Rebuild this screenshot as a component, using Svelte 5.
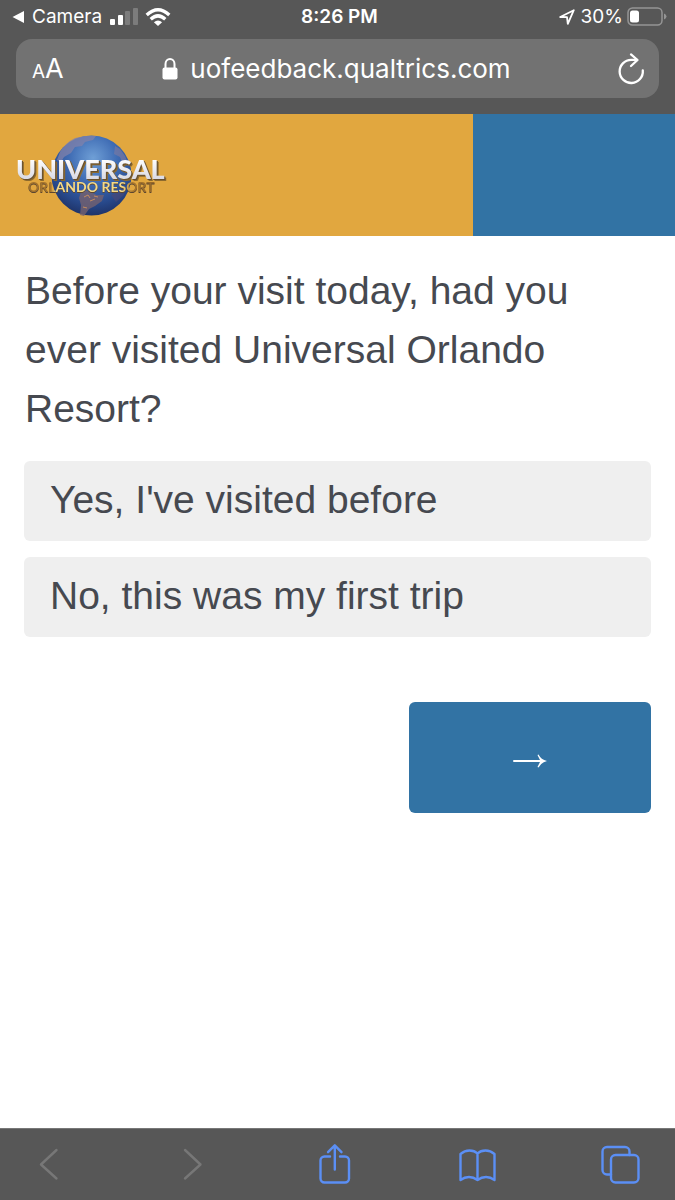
<script>
  const options = [
    { value: 'yes', label: "Yes, I've visited before" },
    { value: 'no', label: 'No, this was my first trip' }
  ];
  let answer = $state('');
</script>

<div class="screen">
  <header class="browser">
    <div class="status">
      <div class="side">
        <svg width="12" height="14" viewBox="0 0 12 14" aria-hidden="true"><path d="M0.5 7 12 1v12z" fill="#fff" /></svg>
        <span class="back">Camera</span>
        <svg class="signal" width="28" height="18" viewBox="0 0 28 18" aria-hidden="true">
          <rect x="0" y="11" width="5" height="6" rx="1" fill="#fff" />
          <rect x="8" y="7" width="5" height="10" rx="1" fill="#fff" />
          <rect x="15" y="3" width="5" height="14" rx="1" fill="#7c7c7c" />
          <rect x="23" y="0" width="5" height="17" rx="1" fill="#7c7c7c" />
        </svg>
        <svg class="wifi" width="26" height="19" viewBox="0 0 26 19" aria-hidden="true">
          <g fill="none" stroke="#fff" stroke-width="3.4">
            <path d="M1.7 7Q13-3.4 24.3 7" />
            <path d="M5.7 11.2Q13 4.6 20.3 11.2" />
          </g>
          <path d="M8.9 14.3Q13 10.8 17.100 14.300L13 18z" fill="#fff" />
        </svg>
      </div>
      <strong class="time">8:26 PM</strong>
      <div class="side right">
        <svg width="16" height="16" viewBox="0 0 16 16" aria-hidden="true"><path d="M1.200 8 14.800 1.200 8.800 14.800 8 8.200z" fill="none" stroke="#fff" stroke-width="1.8" stroke-linejoin="round" /></svg>
        <span class="percent">30%</span>
        <svg class="battery" width="40" height="20" viewBox="0 0 40 20" aria-hidden="true">
          <rect x="1" y="1" width="34" height="17" rx="4.500" fill="none" stroke="#959595" stroke-width="1.500" />
          <rect x="3" y="3.500" width="9" height="12" rx="2.500" fill="#fff" />
          <path d="M37 6.500q2.500 1 2.500 3t-2.500 3z" fill="#959595" />
        </svg>
      </div>
    </div>
    <div class="address">
      <button class="text-size" aria-label="Text size"><span class="small">A</span><span>A</span></button>
      <div class="url">
        <svg width="16" height="22" viewBox="0 0 16 22" aria-hidden="true">
          <path d="M3.500 10V6a4.500 5 0 0 1 9 0v4" fill="none" stroke="#fff" stroke-width="2" />
          <rect x="0.500" y="9.500" width="15" height="12" rx="2" fill="#fff" />
        </svg>
        <span>uofeedback.qualtrics.com</span>
      </div>
      <button class="reload" aria-label="Reload">
        <svg width="28" height="32" viewBox="0 0 28 32">
          <g fill="none" stroke="#fff" stroke-width="2.300" stroke-linecap="round" stroke-linejoin="round">
            <path d="M25.800 17.500A11.600 11.600 0 1 1 14.200 6.800H20" />
            <path d="M14 1.400 20.500 7 14 13" />
          </g>
        </svg>
      </button>
    </div>
  </header>

  <div class="banner">
    <div class="brand">
      <svg width="156" height="88" viewBox="14 131 156 88" role="img" aria-label="Universal Orlando Resort">
        <defs>
          <radialGradient id="ocean" cx="0.52" cy="0.28" r="0.75">
            <stop offset="0" stop-color="#6f9fd6" />
            <stop offset="0.4" stop-color="#3f6cb4" />
            <stop offset="0.75" stop-color="#284a8d" />
            <stop offset="1" stop-color="#1d2f62" />
          </radialGradient>
          <linearGradient id="silver" x1="0" y1="0" x2="0" y2="1">
            <stop offset="0.2" stop-color="#ffffff" />
            <stop offset="1" stop-color="#cfcfdb" />
          </linearGradient>
          <linearGradient id="gold" x1="0" y1="0" x2="1" y2="0">
            <stop offset="0" stop-color="#9d6f2c" />
            <stop offset="0.18" stop-color="#a9772d" />
            <stop offset="0.22" stop-color="#f3d987" />
            <stop offset="0.74" stop-color="#f3d987" />
            <stop offset="0.82" stop-color="#a9772d" />
            <stop offset="1" stop-color="#946628" />
          </linearGradient>
        </defs>
        <circle cx="91.500" cy="175.500" r="40" fill="url(#ocean)" />
        <path d="M60 152q5-9 15-14l10-2 11 0-3 4-8 2-3 4-7 1-4 6-7 4-3 5-4-2z" fill="#8281aa" opacity="0.75" />
        <path d="M115 146l5 3 5 7 3 7-6-1-2-5-6-3z" fill="#7779a3" opacity="0.7" />
        <path d="M82 189l8 3 7 3 7 0-2 6-7 5-6 3-5 7-4-1 1-10-2-7z" fill="#75616f" opacity="0.8" />
        <path d="M84 197l4-2 2 3M90 201l5-2M83 207l4 1M94 196l4 1" stroke="#c38b60" fill="none" />
        <path d="M111 195l9-4 6-4-2 8-8 7z" fill="#4c4a75" opacity="0.6" />
        <text class="wordmark" x="16" y="179">UNIVERSAL</text>
        <text class="tagline" x="28" y="192">ORLANDO RESORT</text>
      </svg>
    </div>
  </div>

  <main>
    <form onsubmit={(event) => event.preventDefault()}>
      <fieldset>
        <legend>Before your visit today, had you ever visited Universal Orlando Resort?</legend>
        <div class="options">
          {#each options as option}
            <label class="option" class:chosen={answer === option.value}>
              <input type="radio" name="visited" value={option.value} bind:group={answer} />
              <span>{option.label}</span>
            </label>
          {/each}
        </div>
      </fieldset>
      <button class="next" type="submit" aria-label="Next">
        <svg width="36" height="16" viewBox="0 0 36 16">
          <path d="M2 8H30" stroke="#fff" stroke-width="2" stroke-linecap="round" />
          <path d="M26.500 1.500Q29 6.500 35 8 29 9.500 26.500 14.500L25.500 14 28.500 8 25.500 2z" fill="#fff" />
        </svg>
      </button>
    </form>
  </main>

  <nav aria-label="Browser">
    <button aria-label="Back" disabled>
      <svg width="40" height="40" viewBox="0 0 40 40"><path d="M26.500 6 11 20.500 26.500 34.500" class="muted" /></svg>
    </button>
    <button aria-label="Forward" disabled>
      <svg width="40" height="40" viewBox="0 0 40 40"><path d="M12 6 27.500 20.500 12 34.500" class="muted" /></svg>
    </button>
    <button aria-label="Share">
      <svg width="40" height="40" viewBox="0 0 40 40">
        <path d="M14 12.500H8.500a4 4 0 0 0-4 4V34.500a4 4 0 0 0 4 4H29a4 4 0 0 0 4-4V16.500a4 4 0 0 0-4-4H24" />
        <path d="M18.800 25.500V1.500M12 8.200 18.800 1.300 25.500 8.200" />
      </svg>
    </button>
    <button aria-label="Bookmarks">
      <svg width="40" height="40" viewBox="0 0 40 40">
        <path d="M19.500 9.500Q16.500 6.500 11.500 6.500T2.500 10V36Q6.500 33 11 33T19.500 36Q23.500 33 28 33T36.500 36V10Q32.500 6.500 27.500 6.500T19.500 9.500V36" />
      </svg>
    </button>
    <button aria-label="Tabs">
      <svg width="40" height="40" viewBox="0 0 40 40">
        <rect x="10" y="11" width="27.500" height="27.500" rx="4.500" />
        <path d="M28.500 11V7.500a4.500 4.500 0 0 0-4.500-4.500H6A4.500 4.500 0 0 0 1.500 7.500V26a4.500 4.500 0 0 0 4.500 4.500H10" />
      </svg>
    </button>
  </nav>
</div>

<style>
  :global(body) { margin: 0; background: #fff; }
  .screen {
    min-height: 100vh;
    display: flex;
    flex-direction: column;
    font-family: "Liberation Sans", Arial, sans-serif;
    color: #464950;
  }
  button { border: 0; padding: 0; margin: 0; background: none; color: inherit; font: inherit; cursor: pointer; }
  svg { display: block; flex: none; overflow: visible; }

  .browser {
    background: #575757;
    color: #fff;
    font-family: Inter, "Liberation Sans", sans-serif;
    padding: 0 16px 16px;
  }
  .status {
    height: 34px;
    margin: 0 -8px 5px -4px;
    display: grid;
    grid-template-columns: 1fr auto 1fr;
    align-items: center;
    font-size: 19px;
    line-height: 24px;
  }
  .side { display: flex; align-items: center; }
  .right { justify-content: flex-end; }
  .back { margin-left: 8px; }
  .signal { margin-left: 8px; }
  .wifi { margin-left: 7px; }
  .time { font-weight: 600; }
  .percent { margin: 0 4px 0 6px; }

  .address {
    height: 59px;
    display: grid;
    grid-template-columns: 48px 1fr 48px;
    align-items: center;
    border-radius: 16px;
    background: #727272;
    font-size: 26px;
  }
  .text-size { padding-left: 16px; display: flex; align-items: baseline; font-size: 27px; }
  .small { font-size: 19px; }
  .url { display: flex; justify-content: center; align-items: center; gap: 12px; padding-right: 2px; }
  .reload { justify-self: end; padding-right: 14px; }

  .banner { display: flex; background: #3273a4; }
  .brand { width: 70%; background: #e1a73f; padding: 17px 14px; box-sizing: border-box; }
  .wordmark {
    font: 900 27px Lato, sans-serif;
    fill: url(#silver);
    filter: drop-shadow(1px 1px 0 #67502f) drop-shadow(1px 1px 0 #8d6a2e);
  }
  .tagline {
    font: 700 14px Lato, sans-serif;
    fill: url(#gold);
    filter: drop-shadow(0 1px 0 #5b4630);
  }

  main { flex: 1; padding: 25px 24px; }
  form { display: flex; flex-direction: column; }
  fieldset { border: 0; margin: 0; padding: 0; min-width: 0; }
  legend { padding: 0 1px; font-size: 39px; line-height: 59px; }
  .options { display: grid; gap: 16px; padding-top: 23px; }
  .option {
    position: relative;
    padding: 10px 26px 12px;
    border-radius: 6px;
    background: #efefef;
    font-size: 39px;
    line-height: 58px;
    cursor: pointer;
  }
  .option input { position: absolute; opacity: 0; margin: 0; }
  .option:focus-within { outline: 2px solid #3273a4; }
  .chosen { background: #3273a4; color: #fff; }
  .next {
    align-self: flex-end;
    margin-top: 65px;
    padding: 51px 103px 44px;
    border-radius: 6px;
    background: #3273a4;
  }

  nav {
    display: flex;
    justify-content: space-between;
    align-items: center;
    height: 69px;
    padding: 0 34px 2px 30px;
    border-top: 1px solid #777;
    background: #575757;
  }
  nav svg { fill: none; stroke: #5b8ff5; stroke-width: 2.4; stroke-linecap: round; stroke-linejoin: round; }
  nav .muted { stroke: #777; }
</style>
